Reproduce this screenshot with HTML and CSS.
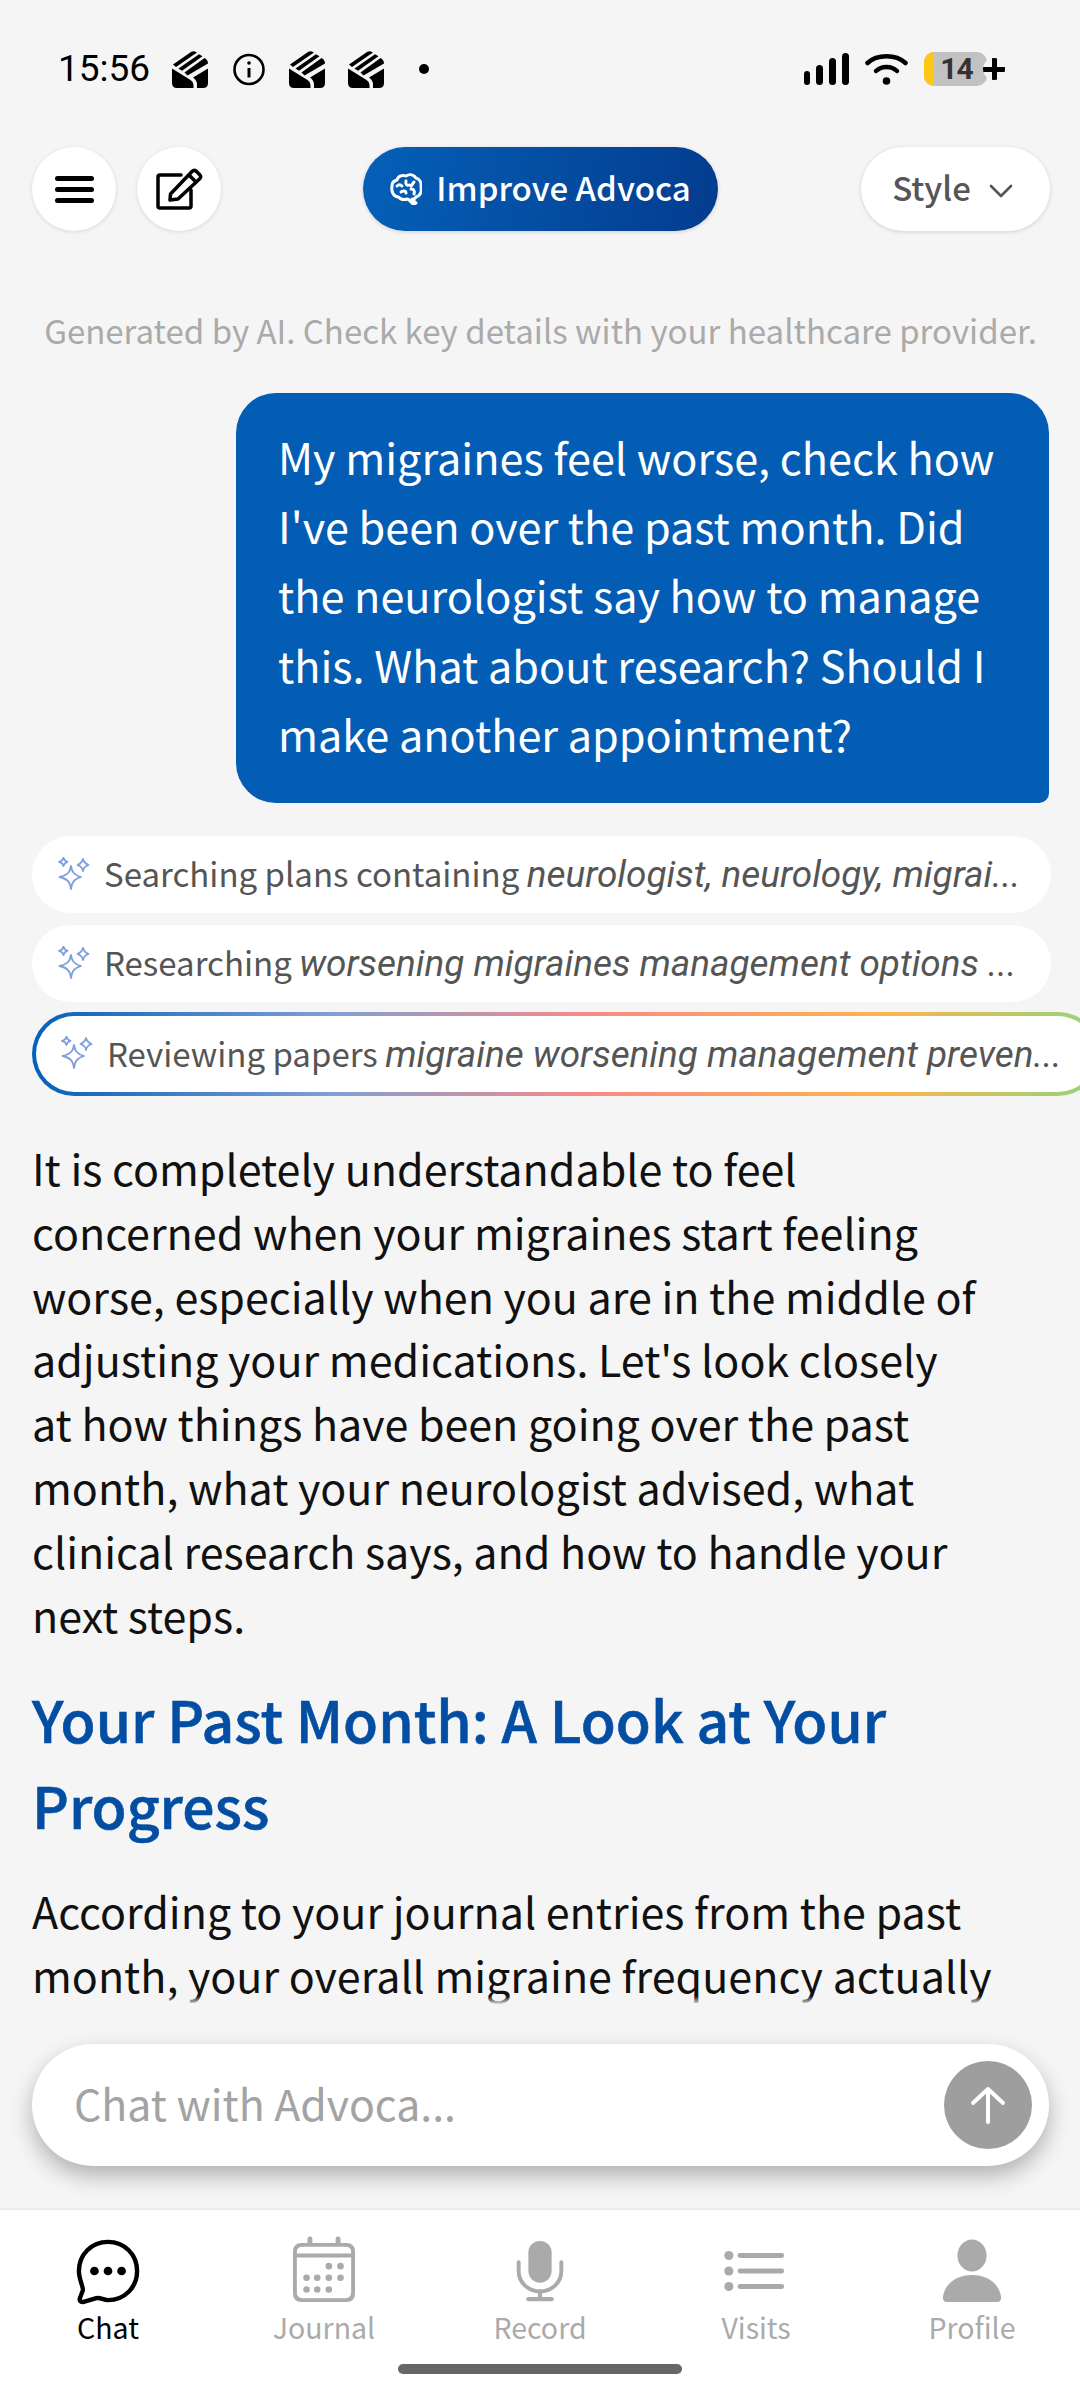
FILE: index.html
```html
<!DOCTYPE html>
<html lang="en">
<head>
    <meta charset="UTF-8">
    <meta name="viewport" content="width=device-width, initial-scale=1.0">
    <title>Advoca Chat</title>
    <link rel="stylesheet" href="styles.css">
</head>
<body>
    <svg class="defs" aria-hidden="true">
        <symbol id="mail" viewBox="0 0 36 37">
            <path d="M0 17.500 L18.500 29 Q21.500 31 21.500 35 L21.500 37 L5 37 Q0 37 0 32 Z"/>
            <path d="M36 17.500 V32 Q36 37 31 37 H25 V34 Q25 29 21 26.500 Z"/>
            <path d="M1 13.500 L19 1 Q21.500 -0.600 24 1 L25 1.600 L4 16 Z"/>
            <path d="M6.500 17.500 L27 3.200 L30.500 5.200 L10 19.800 Z"/>
            <path d="M12.500 21.500 L32.500 7 Q36 9 36 12.500 L15.500 24.500 Z"/>
        </symbol>
        <symbol id="sparkle" viewBox="0 0 32 33" fill="none" stroke="#7f9fdc" stroke-width="1.800" stroke-linejoin="round">
            <path d="M13 9 C14 15 16 18 23 20 C16 22 14 25 13 32 C12 25 10 22 1.500 20 C10 18 12 15 13 9 Z"/>
            <path d="M5.500 0.800 C6 3 7 4 9.500 4.800 C7 5.600 6 6.600 5.500 9 C5 6.600 4 5.600 1 4.800 C4 4 5 3 5.500 0.800 Z"/>
            <path d="M25 2 C25.600 5 26.800 6.200 30.500 8 C26.800 9.300 25.600 10.500 25 14 C24.400 10.500 23.200 9.300 19.500 8 C23.200 6.200 24.400 5 25 2 Z"/>
        </symbol>
    </svg>

    <div class="screen">
        <div class="status-bar">
            <div class="status-left">
                <span class="time">15:56</span>
                <svg class="mail-icon"><use href="#mail"/></svg>
                <svg class="info-icon" viewBox="0 0 32 32" fill="none" stroke="#000" stroke-width="2.600">
                    <circle cx="16" cy="16" r="14.500"/>
                    <path d="M16 14.500 V24" stroke-width="3"/>
                    <circle cx="16" cy="9.500" r="1.800" fill="#000" stroke="none"/>
                </svg>
                <svg class="mail-icon"><use href="#mail"/></svg>
                <svg class="mail-icon"><use href="#mail"/></svg>
                <span class="status-dot"></span>
            </div>
            <div class="status-right">
                <svg class="signal-icon" viewBox="0 0 45 32" fill="#000">
                    <rect x="0" y="18" width="6" height="14" rx="3"/>
                    <rect x="12" y="12" width="7" height="20" rx="3.500"/>
                    <rect x="25" y="5" width="7" height="27" rx="3.500"/>
                    <rect x="38" y="0" width="7" height="32" rx="3.500"/>
                </svg>
                <svg class="wifi-icon" viewBox="0 0 43 32" fill="none" stroke="#000" stroke-linecap="round">
                    <path d="M2.500 10 C12 1 31 1 40.500 10" stroke-width="4.500"/>
                    <path d="M11 18 C16.500 12.500 26.500 12.500 32 18" stroke-width="4.500"/>
                    <circle cx="21.500" cy="28" r="3.800" fill="#000" stroke="none"/>
                </svg>
                <div class="battery">
                    <span class="battery-level"></span>
                    <span class="battery-num">14</span>
                </div>
                <span class="battery-plus"></span>
            </div>
        </div>

        <div class="toolbar">
            <div class="toolbar-left">
                <button class="round-button">
                    <svg class="menu-icon" viewBox="0 0 39 27" fill="#000">
                        <rect x="0" y="0" width="39" height="5" rx="2.500"/>
                        <rect x="0" y="11" width="39" height="5" rx="2.500"/>
                        <rect x="0" y="22" width="39" height="5" rx="2.500"/>
                    </svg>
                </button>
                <button class="round-button">
                    <svg class="edit-icon" viewBox="0 0 47 42" fill="none" stroke="#000" stroke-width="3.500" stroke-linejoin="round" stroke-linecap="round">
                        <path d="M25 7 H4 Q2 7 2 9 V38 Q2 40 4 40 H33 Q35 40 35 38 V22"/>
                        <path d="M14 32 L14.500 26 L36 3.500 Q38 1.500 40 3 L44 7 Q45.500 9 43.500 11 L22 31 Z"/>
                        <path d="M34 8 L39 13"/>
                    </svg>
                </button>
            </div>
            <button class="improve-button">
                <svg class="brain-icon" viewBox="0 0 32 32" fill="none" stroke="#fff" stroke-width="3" stroke-linecap="round" stroke-linejoin="round">
                    <path d="M2 14 C1.500 9 5 7.500 7 7 C8 3 13 1.500 16 3 C20 0.500 24 2 26 5 C30 6 31.500 10 31 14 C32 18 30.500 23 26 24 C25 26 23 26.500 22 26 L26 30 L23.500 31.500 L18 26 C14 27 10 26 8.500 24 C4 24 1 19 2 14 Z"/>
                    <path d="M7 13 C9 11 11 12 12 13 M16 8 C15 11 17 13 19 12 M24 9 L21 13 M11 19 C13 17 16 18 16 20 M21 16 C24 16 25 18 24 21"/>
                </svg>
                Improve Advoca
            </button>
            <button class="style-button">
                Style
                <svg class="chevron-icon" viewBox="0 0 24 14" fill="none" stroke="#555" stroke-width="2.600" stroke-linecap="round" stroke-linejoin="round">
                    <path d="M2 2 L12 12 L22 2"/>
                </svg>
            </button>
        </div>

        <div class="chat">
            <p class="disclaimer">Generated by AI. Check key details with your healthcare provider.</p>

            <div class="user-bubble">My migraines feel worse, check how I've been over the past month. Did the neurologist say how to manage this. What about research? Should I make another appointment?</div>

            <div class="tool-list">
                <div class="tool-chip">
                    <svg class="sparkle-icon"><use href="#sparkle"/></svg>
                    <span class="tool-text">Searching plans containing <em>neurologist, neurology, migrai...</em></span>
                </div>
                <div class="tool-chip">
                    <svg class="sparkle-icon"><use href="#sparkle"/></svg>
                    <span class="tool-text">Researching <em>worsening migraines management options ...</em></span>
                </div>
                <div class="tool-chip active">
                    <svg class="sparkle-icon"><use href="#sparkle"/></svg>
                    <span class="tool-text">Reviewing papers <em>migraine worsening management preven...</em></span>
                </div>
            </div>

            <div class="answer">
                <p>It is completely understandable to feel concerned when your migraines start feeling worse, especially when you are in the middle of adjusting your medications. Let's look closely<br>at how things have been going over the past month, what your neurologist advised, what clinical research says, and how to handle your next steps.</p>
                <h2>Your Past Month: A Look at Your Progress</h2>
                <p>According to your journal entries from the past month, your overall migraine frequency actually</p>
            </div>
        </div>

        <div class="composer">
            <div class="chat-input">
                <span class="placeholder">Chat with Advoca...</span>
                <button class="send-button">
                    <svg class="arrow-icon" viewBox="0 0 36 38" fill="none" stroke="#fff" stroke-width="4" stroke-linecap="round" stroke-linejoin="round">
                        <path d="M18 36 V3 M3 17 L18 3 L33 17"/>
                    </svg>
                </button>
            </div>
        </div>

        <nav class="bottom-nav">
            <div class="nav-item current">
                <svg class="nav-icon" viewBox="0 0 66 66" fill="none" stroke="#000" stroke-width="4.500" stroke-linejoin="round">
                    <path d="M33 3 C50 3 63 16 63 33 C63 50 50 63 33 63 C28 63 25 60 21 61 L7 65 Q3 65 4 61 L7 53 C8 50 3 42 3 33 C3 16 16 3 33 3 Z"/>
                    <circle cx="19" cy="33" r="4.500" fill="#000" stroke="none"/>
                    <circle cx="33" cy="33" r="4.500" fill="#000" stroke="none"/>
                    <circle cx="47" cy="33" r="4.500" fill="#000" stroke="none"/>
                </svg>
                <span>Chat</span>
            </div>
            <div class="nav-item">
                <svg class="nav-icon" viewBox="0 0 66 66" fill="#aaa">
                    <path d="M16 0 a2.500 2.500 0 0 1 5 0 V4 H45 V0 a2.500 2.500 0 0 1 5 0 V4 H56 Q65 4 65 13 V56 Q65 65 56 65 H10 Q1 65 1 56 V13 Q1 4 10 4 H16 Z M5 19 V55 Q5 61 11 61 H55 Q61 61 61 55 V19 Z M5 15 H61 V13 Q61 8 55 8 H11 Q5 8 5 13 Z"/>
                    <circle cx="38" cy="28" r="3.400"/><circle cx="50" cy="28" r="3.400"/>
                    <circle cx="15" cy="40" r="3.400"/><circle cx="26" cy="40" r="3.400"/><circle cx="38" cy="40" r="3.400"/><circle cx="50" cy="40" r="3.400"/>
                    <circle cx="15" cy="52" r="3.400"/><circle cx="26" cy="52" r="3.400"/><circle cx="38" cy="52" r="3.400"/>
                </svg>
                <span>Journal</span>
            </div>
            <div class="nav-item">
                <svg class="nav-icon" viewBox="0 0 66 66" fill="#aaa">
                    <rect x="21" y="2" width="24" height="43" rx="12"/>
                    <path d="M11 24 V33 C11 45 21 54 33 54 C45 54 55 45 55 33 V24" fill="none" stroke="#aaa" stroke-width="4" stroke-linecap="round"/>
                    <path d="M33 54 V62 M21 62 H45" fill="none" stroke="#aaa" stroke-width="4.500" stroke-linecap="round"/>
                </svg>
                <span>Record</span>
            </div>
            <div class="nav-item">
                <svg class="nav-icon" viewBox="0 0 66 66" fill="#aaa">
                    <circle cx="5" cy="17" r="4.700"/><circle cx="5" cy="33" r="4.700"/><circle cx="5" cy="49" r="4.700"/>
                    <rect x="14" y="14.500" width="48" height="5" rx="2.500"/>
                    <rect x="14" y="30.500" width="48" height="5" rx="2.500"/>
                    <rect x="14" y="46.500" width="48" height="5" rx="2.500"/>
                </svg>
                <span>Visits</span>
            </div>
            <div class="nav-item">
                <svg class="nav-icon" viewBox="0 0 66 66" fill="#aaa">
                    <ellipse cx="33" cy="17" rx="15" ry="16.500"/>
                    <path d="M3 60 C5 45 18 37 33 37 C48 37 61 45 63 60 Q63 65 59 65 H7 Q3 65 3 60 Z"/>
                </svg>
                <span>Profile</span>
            </div>
        </nav>
        <div class="home-bar"></div>
    </div>
</body>
</html>
```

FILE: styles.css
```css
* {
    margin: 0;
    padding: 0;
    box-sizing: border-box;
}

html, body {
    width: 1080px;
    height: 2400px;
    overflow: hidden;
}

body {
    background: #f5f5f5;
    font-family: "Noto Sans CJK JP", "Noto Sans", sans-serif;
}

button {
    border: none;
    font-family: inherit;
    cursor: pointer;
}

.defs {
    display: none;
}

.screen {
    position: relative;
    width: 1080px;
    height: 2400px;
    display: flex;
    flex-direction: column;
    overflow: hidden;
}

/* status bar */
.status-bar {
    height: 147px;
    flex-shrink: 0;
    display: flex;
    justify-content: space-between;
    align-items: flex-start;
    padding: 49px 75px 0 58px;
}

.status-left,
.status-right {
    display: flex;
    align-items: center;
    height: 40px;
}

.status-left {
    gap: 23px;
}

.time {
    font-family: Roboto, sans-serif;
    font-size: 37px;
    color: #000;
    width: 91px;
    line-height: 40px;
}

.mail-icon {
    width: 36px;
    height: 37px;
}

.info-icon {
    width: 32px;
    height: 33px;
    margin: 0 1px 0 2px;
}

.status-dot {
    width: 10px;
    height: 10px;
    border-radius: 50%;
    background: #000;
    margin-left: 12px;
}

.signal-icon {
    width: 45px;
    height: 32px;
    margin-right: 16px;
}

.wifi-icon {
    width: 43px;
    height: 32px;
    margin-right: 16px;
}

.battery {
    position: relative;
    width: 63px;
    height: 34px;
    border-radius: 10px;
    background: #c2c2c2;
    overflow: hidden;
    display: flex;
    align-items: center;
    justify-content: center;
}

.battery-level {
    position: absolute;
    left: 0;
    top: 0;
    bottom: 0;
    width: 10px;
    background: #fdc815;
}

.battery-num {
    position: relative;
    font-family: Roboto, sans-serif;
    font-size: 30px;
    font-weight: 700;
    letter-spacing: -1px;
    color: #333;
    line-height: 34px;
    margin-left: 2px;
}

.battery-plus {
    position: relative;
    width: 22px;
    height: 22px;
    margin-left: -4px;
    border-radius: 50%;
    background:
        linear-gradient(#000, #000) center / 22px 5px no-repeat,
        linear-gradient(#000, #000) center / 5px 22px no-repeat,
        #f5f5f5;
}

/* toolbar */
.toolbar {
    height: 84px;
    flex-shrink: 0;
    display: grid;
    grid-template-columns: 1fr auto 1fr;
    padding: 0 30px 0 32px;
}

.toolbar-left {
    display: flex;
    gap: 21px;
}

.round-button {
    width: 84px;
    height: 84px;
    border-radius: 50%;
    background: #fff;
    box-shadow: 0 1px 4px rgba(0,0,0,0.12);
    display: flex;
    align-items: center;
    justify-content: center;
}

.menu-icon {
    width: 39px;
    height: 27px;
}

.edit-icon {
    width: 47px;
    height: 42px;
}

.improve-button {
    width: 355px;
    height: 84px;
    margin-left: -1px;
    border-radius: 42px;
    background: linear-gradient(100deg, #0560b8, #033c8e);
    box-shadow: 0 1px 4px rgba(0,0,0,0.15);
    color: #fff;
    font-size: 33px;
    font-weight: 500;
    padding-bottom: 4px;
    display: flex;
    align-items: center;
    justify-content: center;
    gap: 14px;
}

.brain-icon {
    width: 32px;
    height: 32px;
    margin-top: 4px;
}

.style-button {
    justify-self: end;
    width: 189px;
    height: 84px;
    border-radius: 42px;
    background: #fff;
    box-shadow: 0 1px 4px rgba(0,0,0,0.15);
    color: #555;
    font-size: 33px;
    font-weight: 500;
    padding: 0 6px 4px 0;
    display: flex;
    align-items: center;
    justify-content: center;
    gap: 18px;
}

.chevron-icon {
    width: 24px;
    height: 14px;
    margin-top: 7px;
}

/* chat area */
.chat {
    flex: 1;
    min-height: 0;
    overflow: hidden;
    padding: 0 31px 0 32px;
}

.disclaimer {
    margin-top: 73px;
    font-size: 33px;
    line-height: 52px;
    color: #aaa;
    text-align: center;
    white-space: nowrap;
}

.user-bubble {
    margin: 37px 0 0 auto;
    width: 813px;
    height: 410px;
    padding: 29px 42px;
    background: #045db5;
    color: #fff;
    font-size: 43.200px;
    line-height: 69.200px;
    border-radius: 40px 40px 10px 40px;
}

.tool-list {
    margin-top: 33px;
    display: flex;
    flex-direction: column;
    gap: 12px;
}

.tool-chip {
    width: 1019px;
    height: 77px;
    border-radius: 39px;
    background: #fff;
    display: flex;
    align-items: center;
    padding: 0 0 3px 26px;
    gap: 14px;
    flex-shrink: 0;
}

.tool-chip.active {
    width: 1068px;
    height: 84px;
    border-radius: 42px;
    margin-top: -2px;
    padding-left: 25px;
    border: 4px solid transparent;
    background:
        linear-gradient(#fff, #fff) padding-box,
        linear-gradient(90deg, #0560b8, #7f9fd6 28%, #f98a85 52%, #fdb44b 80%, #8fd67a 100%) border-box;
}

.sparkle-icon {
    width: 32px;
    height: 33px;
    flex-shrink: 0;
}

.tool-text {
    font-size: 33px;
    color: #555;
    white-space: nowrap;
}

.tool-text em {
    font-family: Roboto, sans-serif;
    font-size: 36.900px;
    font-style: italic;
}

.answer {
    margin-top: 40px;
    max-width: 962px;
    color: #111;
}

.answer p {
    font-size: 43px;
    line-height: 63.800px;
}

.answer h2 {
    margin: 29px 0 32px;
    font-size: 57px;
    font-weight: 500;
    -webkit-text-stroke: 0.6px #034ea2;
    line-height: 86px;
    color: #034ea2;
}

/* composer */
.composer {
    flex-shrink: 0;
    height: 212px;
    padding: 48px 31px 0 32px;
    background: linear-gradient(rgba(245,245,245,0), #f5f5f5 9px);
    margin-top: -8px;
    position: relative;
}

.chat-input {
    height: 122px;
    border-radius: 61px;
    background: #fff;
    box-shadow: 0 10px 22px rgba(0,0,0,0.28);
    display: flex;
    align-items: center;
    justify-content: space-between;
    padding: 0 17px 0 42px;
}

.placeholder {
    font-size: 42.800px;
    color: #a3a3a3;
    padding-bottom: 7px;
}

.send-button {
    width: 88px;
    height: 88px;
    border-radius: 50%;
    background: #9e9e9e;
    display: flex;
    align-items: center;
    justify-content: center;
}

.arrow-icon {
    width: 36px;
    height: 38px;
}

/* bottom navigation */
.bottom-nav {
    position: relative;
    flex-shrink: 0;
    height: 192px;
    background: #fff;
    border-top: 2px solid #ececec;
    display: flex;
    padding-top: 29px;
}

.nav-item {
    flex: 1;
    display: flex;
    flex-direction: column;
    align-items: center;
    color: #aaa;
    font-size: 28.500px;
    line-height: 44px;
}

.nav-item.current {
    color: #000;
}

.nav-icon {
    width: 64px;
    height: 64px;
    margin-bottom: 2px;
    overflow: visible;
}

.home-bar {
    position: absolute;
    left: 398px;
    top: 2364px;
    width: 284px;
    height: 10px;
    border-radius: 5px;
    background: #666;
}
```
